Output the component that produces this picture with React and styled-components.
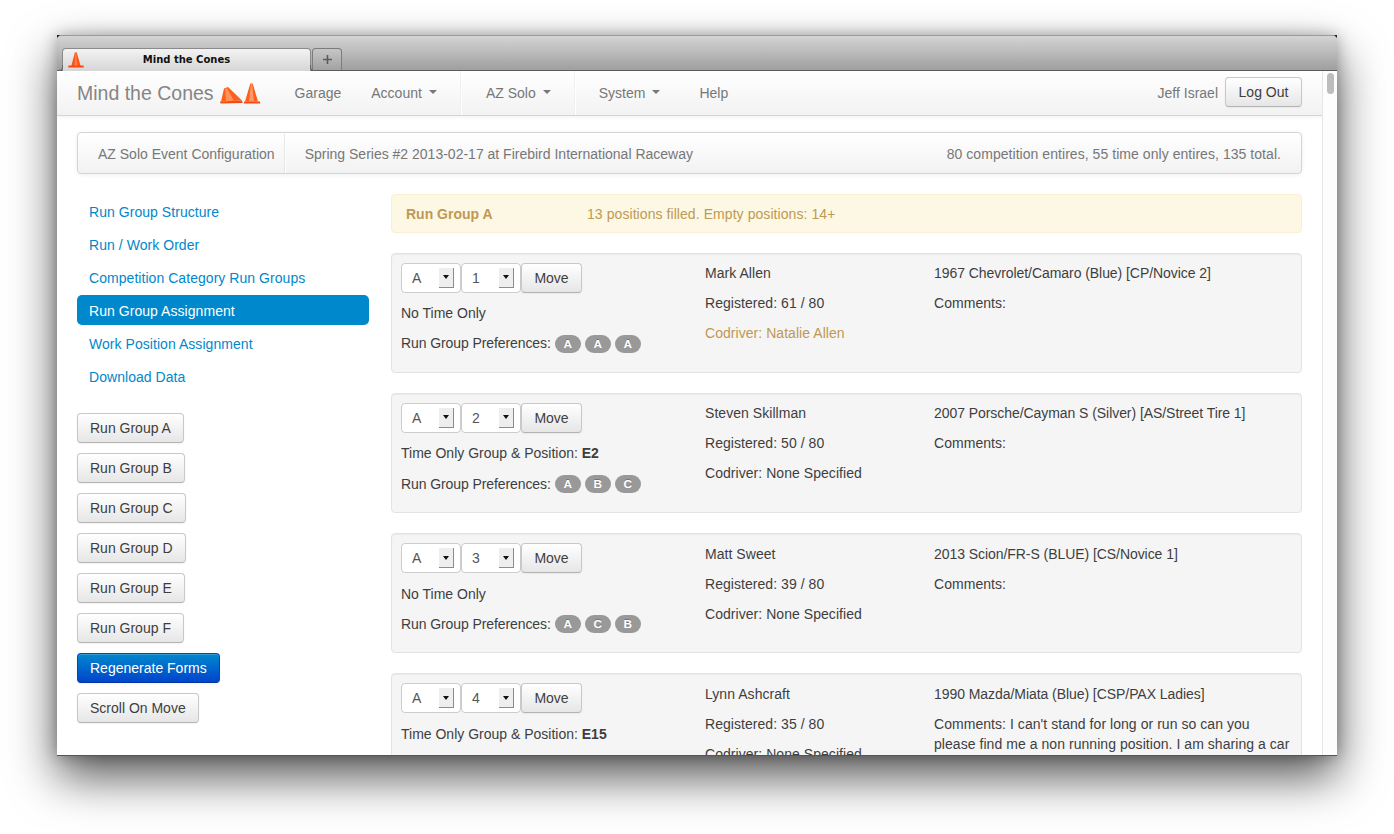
import React from 'react';
import styled, { createGlobalStyle } from 'styled-components';

const GlobalStyle = createGlobalStyle`
  html, body {
    margin: 0;
    padding: 0;
    background: #fff;
    height: 100%;
    overflow: hidden;
  }
  body {
    font-family: "Liberation Sans", Arial, sans-serif;
    font-size: 14px;
    line-height: 20px;
    color: #3e3e3e;
  }
`;

const Desktop = styled.div`
  width: 1394px;
  height: 834px;
  padding: 35px 57px 78px;
  box-sizing: border-box;
  overflow: hidden;
`;

const WindowFrame = styled.div`
  box-shadow: 0 21px 44px rgba(0, 0, 0, 0.66), 0 0 14px rgba(0, 0, 0, 0.28);
`;

const Window = styled.div`
  position: relative;
  display: flex;
  flex-direction: column;
  height: 721px;
  overflow: hidden;
`;

const CornerNotch = styled.span`
  position: absolute;
  top: 0;
  ${p => (p.$right ? 'right: 0;' : 'left: 0;')}
  width: 0;
  height: 0;
  border-top: 3px solid #222;
  ${p => (p.$right ? 'border-left' : 'border-right')}: 3px solid transparent;
`;

const TitleBar = styled.div`
  flex: none;
  display: flex;
  align-items: flex-end;
  gap: 1px;
  height: 36px;
  box-sizing: border-box;
  padding-left: 5px;
  background: linear-gradient(#d4d4d4, #c4c4c4 30%, #9f9f9f);
  border-top: 1px solid #9a9a9a;
  border-bottom: 1px solid #5c5c5c;
`;

const Tab = styled.div`
  position: relative;
  width: 249px;
  height: 23px;
  margin-bottom: -1px;
  box-sizing: border-box;
  display: flex;
  align-items: center;
  justify-content: center;
  font-family: "DejaVu Sans", Verdana, sans-serif;
  font-size: 10px;
  font-weight: bold;
  color: #111;
  background: linear-gradient(#f3f3f3, #d6d6d6);
  border: 1px solid #8a8a8a;
  border-bottom: none;
  border-radius: 4px 4px 0 0;
  svg {
    position: absolute;
    left: 5px;
    top: 3px;
  }
  &::before,
  &::after {
    content: '';
    position: absolute;
    bottom: 0;
    width: 4px;
    height: 5px;
    border-bottom: 1px solid #666;
  }
  &::before {
    left: -5px;
    border-right: 1px solid #666;
    border-bottom-right-radius: 4px;
  }
  &::after {
    right: -5px;
    border-left: 1px solid #666;
    border-bottom-left-radius: 4px;
  }
`;

const NewTab = styled.div`
  width: 30px;
  height: 22px;
  box-sizing: border-box;
  display: flex;
  align-items: center;
  justify-content: center;
  background: linear-gradient(#c6c6c6, #a2a2a2);
  border: 1px solid #7c7c7c;
  border-bottom: none;
  border-radius: 4px 4px 0 0;
  color: #555;
`;

const Viewport = styled.div`
  flex: 1;
  min-height: 0;
  display: flex;
  background: #fff;
  border-bottom: 1px solid #555;
`;

const Page = styled.div`
  flex: 1;
  min-width: 0;
  overflow: hidden;
`;

const ScrollTrack = styled.div`
  flex: none;
  width: 15px;
  box-sizing: border-box;
  padding: 2px 3px 0 4px;
  background: #fdfdfd;
  border-left: 1px solid #e6e6e6;
`;

const ScrollThumb = styled.div`
  height: 21px;
  border-radius: 4px;
  background: #bdbdbd;
`;

const NavBar = styled.div`
  height: 45px;
  box-sizing: border-box;
  display: flex;
  align-items: center;
  padding: 0 20px;
  background: linear-gradient(#fff, #f2f2f2);
  border-bottom: 1px solid #d4d4d4;
  box-shadow: 0 1px 4px rgba(0, 0, 0, 0.06);
`;

const Brand = styled.div`
  display: flex;
  align-items: center;
  gap: 6px;
  margin-right: 18px;
  font-size: 19.5px;
  font-weight: 200;
  color: #858585;
`;

const NavLink = styled.div`
  display: flex;
  align-items: center;
  height: 44px;
  padding: 0 15px;
  color: #777;
  margin-left: ${p => p.$offset || 0}px;
`;

const Caret = styled.span`
  width: 0;
  height: 0;
  margin-left: 7px;
  margin-bottom: 2px;
  border-left: 4px solid transparent;
  border-right: 4px solid transparent;
  border-top: 4px solid #777;
`;

const NavDivider = styled.div`
  width: 1px;
  height: 44px;
  margin: 0 9px 0 8px;
  background: #f0f0f0;
  border-right: 1px solid #fff;
`;

const NavRight = styled.div`
  margin-left: auto;
  display: flex;
  align-items: center;
  gap: 7px;
  color: #777;
`;

const Button = styled.div`
  display: inline-flex;
  align-items: center;
  justify-content: center;
  height: 30px;
  box-sizing: border-box;
  padding: 0 12px;
  white-space: nowrap;
  color: ${p => (p.$primary ? '#fff' : '#3e3e3e')};
  background: ${p =>
    p.$primary ? 'linear-gradient(#0088cc, #0044cc)' : 'linear-gradient(#ffffff, #e6e6e6)'};
  border: 1px solid ${p => (p.$primary ? '#0044cc' : '#c8c8c8')};
  border-bottom-color: ${p => (p.$primary ? '#0036a0' : '#b3b3b3')};
  border-radius: 4px;
  box-shadow: inset 0 1px 0 rgba(255, 255, 255, 0.2), 0 1px 2px rgba(0, 0, 0, 0.05);
`;

const LogOutButton = styled(Button)`
  width: 77px;
  margin-top: -2px;
`;

const MoveButton = styled(Button)`
  width: 61px;
`;

const Content = styled.div`
  padding: 16px 20px 0;
`;

const ConfigBar = styled.div`
  height: 42px;
  box-sizing: border-box;
  display: flex;
  align-items: center;
  margin-bottom: 20px;
  padding: 1px 20px 0 0;
  color: #777;
  background: linear-gradient(#fff, #f2f2f2);
  border: 1px solid #d4d4d4;
  border-radius: 4px;
  box-shadow: 0 1px 4px rgba(0, 0, 0, 0.065);
`;

const ConfigTitle = styled.div`
  height: 100%;
  display: flex;
  align-items: center;
  padding: 0 9px 0 20px;
  border-right: 1px solid #e6e6e6;
  box-shadow: 1px 0 0 #fff;
`;

const ConfigEvent = styled.div`
  margin-left: 20px;
`;

const ConfigTotals = styled.div`
  margin-left: auto;
  letter-spacing: 0.05px;
`;

const Columns = styled.div`
  display: flex;
  gap: 22px;
`;

const Sidebar = styled.div`
  flex: none;
  width: 292px;
  padding-top: 2px;
`;

const SideNav = styled.div`
  display: flex;
  flex-direction: column;
  gap: 3px;
  margin-bottom: 22px;
`;

const SideLink = styled.div`
  height: 30px;
  box-sizing: border-box;
  display: flex;
  align-items: center;
  padding: 2px 12px 0;
  border-radius: 5px;
  letter-spacing: 0.05px;
  color: ${p => (p.$active ? '#fff' : '#0088cc')};
  background: ${p => (p.$active ? '#0088cc' : 'transparent')};
`;

const SideButtons = styled.div`
  display: flex;
  flex-direction: column;
  align-items: flex-start;
  gap: 10px;
`;

const Main = styled.div`
  flex: 1;
  min-width: 0;
`;

const Alert = styled.div`
  height: 39px;
  box-sizing: border-box;
  display: grid;
  grid-template-columns: 181px 1fr;
  align-items: center;
  padding: 0 14px;
  margin-bottom: 19.8px;
  color: #c09853;
  background: #fcf8e3;
  border: 1px solid #fbeed5;
  border-radius: 4px;
`;

const AlertText = styled.span`
  letter-spacing: 0.07px;
`;

/* the fractions keep the 140px well pitch while the text drifts down a pixel,
   the way it does further down the reference */
const Well = styled.div`
  display: grid;
  grid-template-columns: 304px 229px 1fr;
  align-items: start;
  min-height: 120.2px;
  box-sizing: border-box;
  padding: 9.4px 9px 0;
  margin-bottom: 20px;
  background: #f5f5f5;
  border: 1px solid #e3e3e3;
  border-radius: 4px;
  box-shadow: inset 0 1px 1px rgba(0, 0, 0, 0.05);
`;

const MoveRow = styled.div`
  display: flex;
  margin: -0.4px 0 10.4px;
`;

const SelectBox = styled.div`
  width: 60px;
  height: 30px;
  box-sizing: border-box;
  display: flex;
  align-items: center;
  justify-content: space-between;
  padding: 0 6px 0 10px;
  color: #555;
  background: #fff;
  border: 1px solid #ccc;
  border-radius: 4px;
`;

const SelectArrow = styled.span`
  width: 15px;
  height: 20px;
  box-sizing: border-box;
  display: flex;
  align-items: center;
  justify-content: center;
  background: #eeeeee;
  border-right: 1px solid #8c8c8c;
  border-bottom: 1px solid #8c8c8c;
  &::after {
    content: '';
    border-left: 3px solid transparent;
    border-right: 3px solid transparent;
    border-top: 4px solid #111;
  }
`;

const Line = styled.p`
  margin: 0 0 ${p => p.$gap || 10}px;
  color: ${p => (p.$warning ? '#c09853' : 'inherit')};
`;

const DriverColumn = styled.div`
  letter-spacing: 0.05px;
`;

const CarLine = styled(Line)`
  letter-spacing: -0.06px;
`;

const CommentLine = styled(Line)`
  letter-spacing: 0.05px;
`;

const Prefs = styled.div`
  display: flex;
  align-items: center;
  gap: 4px;
  height: 20px;
  margin-bottom: 10px;
  letter-spacing: -0.09px;
`;

const Badge = styled.span`
  display: inline-block;
  box-sizing: border-box;
  width: 26px;
  height: 18px;
  line-height: 18px;
  margin-top: 1px;
  text-align: center;
  font-size: 11.844px;
  font-weight: bold;
  letter-spacing: 0;
  color: #fff;
  background: #999;
  border-radius: 9px;
  text-shadow: 0 -1px 0 rgba(0, 0, 0, 0.25);
`;

const Cone = ({ size = 16 }) => (
  <svg width={size} height={size} viewBox="0 0 16 16">
    <path d="M6.8 0.5h2L12.6 14H3.4z" fill="#ff5316" />
    <path d="M7.4 0.5h.8L9.6 14H6.4z" fill="#ff8040" />
    <path d="M0.5 13.6h15l0.3 1.8H0.2z" fill="#f64a12" />
  </svg>
);

const LogoCones = () => (
  <svg width="42" height="21" viewBox="0 0 42 21">
    <path d="M4 5.5l4-1.5 14 13.5-21 1z" fill="#ff5f1c" />
    <path d="M5 6l2-1 7 13-8 0z" fill="#ff9258" />
    <path d="M0 18.5l22-1 .6 2.5-22 .5z" fill="#f04c14" />
    <path d="M30.3 0.5h2.4L38 18.5H25z" fill="#ff5f1c" />
    <path d="M31 0.5h1L34 18.5h-5z" fill="#ff9a66" />
    <path d="M24 18.5h16l.3 2H23.8z" fill="#f04c14" />
  </svg>
);

const entries = [
  {
    group: 'A', pos: 1, name: 'Mark Allen', reg: '61 / 80', codriver: 'Natalie Allen',
    timeOnly: null, prefs: ['A', 'A', 'A'],
    car: '1967 Chevrolet/Camaro (Blue) [CP/Novice 2]', comments: '',
  },
  {
    group: 'A', pos: 2, name: 'Steven Skillman', reg: '50 / 80', codriver: null,
    timeOnly: 'E2', prefs: ['A', 'B', 'C'],
    car: '2007 Porsche/Cayman S (Silver) [AS/Street Tire 1]', comments: '',
  },
  {
    group: 'A', pos: 3, name: 'Matt Sweet', reg: '39 / 80', codriver: null,
    timeOnly: null, prefs: ['A', 'C', 'B'],
    car: '2013 Scion/FR-S (BLUE) [CS/Novice 1]', comments: '',
  },
  {
    group: 'A', pos: 4, name: 'Lynn Ashcraft', reg: '35 / 80', codriver: null,
    timeOnly: 'E15', prefs: ['A', 'B', 'C'],
    car: '1990 Mazda/Miata (Blue) [CSP/PAX Ladies]',
    comments: " I can't stand for long or run so can you please find me a non running position. I am sharing a car",
  },
];

const sideLinks = [
  'Run Group Structure',
  'Run / Work Order',
  'Competition Category Run Groups',
  'Run Group Assignment',
  'Work Position Assignment',
  'Download Data',
];

function Entry({ entry }) {
  return (
    <Well>
      <div>
        <MoveRow>
          <SelectBox>{entry.group}<SelectArrow /></SelectBox>
          <SelectBox>{entry.pos}<SelectArrow /></SelectBox>
          <MoveButton>Move</MoveButton>
        </MoveRow>
        <Line $gap={10.2}>
          {entry.timeOnly
            ? <>Time Only Group &amp; Position: <b>{entry.timeOnly}</b></>
            : 'No Time Only'}
        </Line>
        <Prefs>
          Run Group Preferences:
          {entry.prefs.map((p, i) => <Badge key={i}>{p}</Badge>)}
        </Prefs>
      </div>
      <DriverColumn>
        <Line>{entry.name}</Line>
        <Line>Registered: {entry.reg}</Line>
        {entry.codriver
          ? <Line $warning>Codriver: {entry.codriver}</Line>
          : <Line>Codriver: None Specified</Line>}
      </DriverColumn>
      <div>
        <CarLine>{entry.car}</CarLine>
        <CommentLine>Comments:{entry.comments}</CommentLine>
      </div>
    </Well>
  );
}

export default function App() {
  return (
    <Desktop>
      <GlobalStyle />
      <WindowFrame>
        <Window>
          <CornerNotch />
          <CornerNotch $right />
          <TitleBar>
            <Tab><Cone />Mind the Cones</Tab>
            <NewTab>
              <svg width="11" height="11" viewBox="0 0 11 11">
                <path d="M5.5 1v9M1 5.5h9" stroke="#5a5a5a" strokeWidth="1.6" />
              </svg>
            </NewTab>
          </TitleBar>
          <Viewport>
            <Page>
              <NavBar>
                <Brand>Mind the Cones <LogoCones /></Brand>
                <NavLink>Garage</NavLink>
                <NavLink>Account<Caret /></NavLink>
                <NavDivider />
                <NavLink>AZ Solo<Caret /></NavLink>
                <NavDivider />
                <NavLink $offset={-1}>System<Caret /></NavLink>
                <NavLink $offset={9}>Help</NavLink>
                <NavRight>
                  Jeff Israel
                  <LogOutButton>Log Out</LogOutButton>
                </NavRight>
              </NavBar>
              <Content>
                <ConfigBar>
                  <ConfigTitle>AZ Solo Event Configuration</ConfigTitle>
                  <ConfigEvent>Spring Series #2 2013-02-17 at Firebird International Raceway</ConfigEvent>
                  <ConfigTotals>80 competition entires, 55 time only entires, 135 total.</ConfigTotals>
                </ConfigBar>
                <Columns>
                  <Sidebar>
                    <SideNav>
                      {sideLinks.map(l => (
                        <SideLink key={l} $active={l === 'Run Group Assignment'}>{l}</SideLink>
                      ))}
                    </SideNav>
                    <SideButtons>
                      {['A', 'B', 'C', 'D', 'E', 'F'].map(g => (
                        <Button key={g}>Run Group {g}</Button>
                      ))}
                      <Button $primary>Regenerate Forms</Button>
                      <Button>Scroll On Move</Button>
                    </SideButtons>
                  </Sidebar>
                  <Main>
                    <Alert>
                      <b>Run Group A</b>
                      <AlertText>13 positions filled. Empty positions: 14+</AlertText>
                    </Alert>
                    {entries.map(e => <Entry key={e.pos} entry={e} />)}
                  </Main>
                </Columns>
              </Content>
            </Page>
            <ScrollTrack><ScrollThumb /></ScrollTrack>
          </Viewport>
        </Window>
      </WindowFrame>
    </Desktop>
  );
}
